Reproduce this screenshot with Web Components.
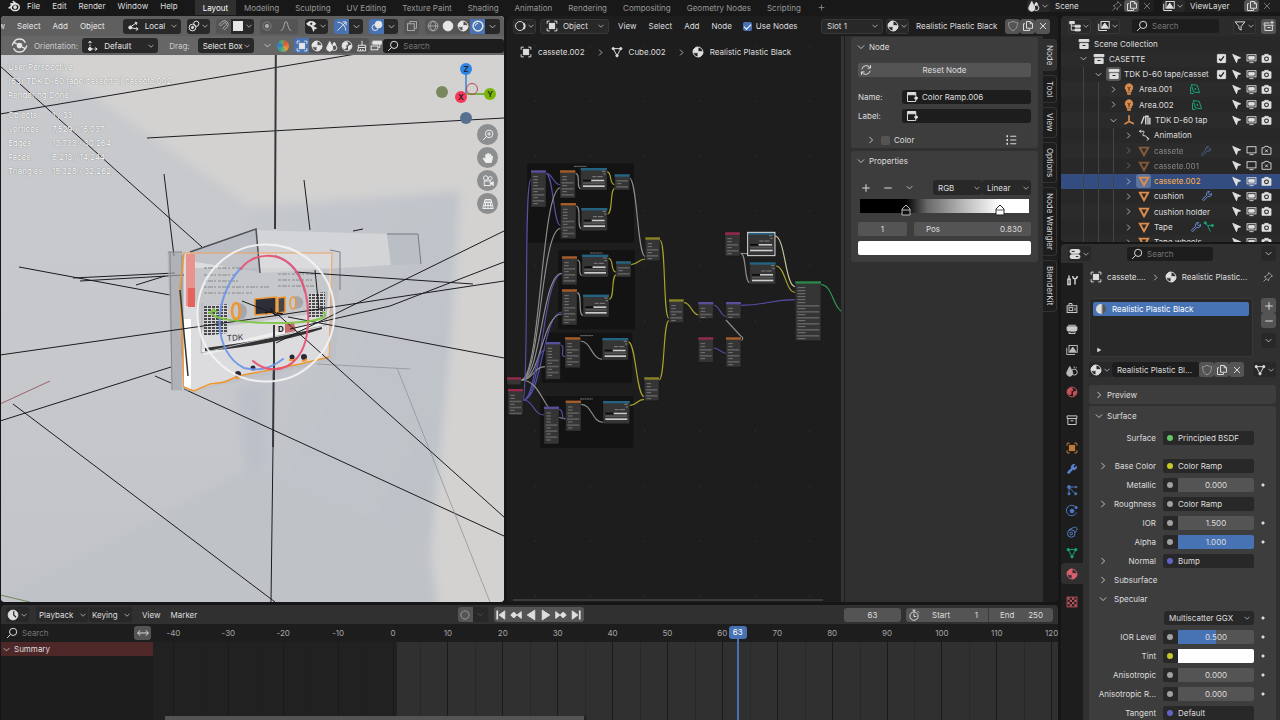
<!DOCTYPE html>
<html lang="en">
<head>
<meta charset="utf-8">
<title>Blender</title>
<style>
  body {
    margin: 0;
    overflow: hidden;
    background: #161616;
    color: #dedede;
    font: 8px/12px Inter, "Noto Sans", sans-serif;
  }
</style>
</head>
<body>
<blender-app></blender-app>

<script>
const ICONS = {
  down: '<path d="M3 5.500l5 5 5-5"/>',
  right: '<path d="M5.500 3l5 5-5 5"/>',
  play: '<path class="f" d="M4 3l9 5-9 5z"/>',
  plus: '<path d="M8 3v10M3 8h10"/>',
  minus: '<path d="M3 8h10"/>',
  close: '<path d="M4 4l8 8M12 4l-8 8"/>',
  search: '<circle cx="9.5" cy="6.5" r="4.8"/><path d="M6 10l-4.5 4.5"/>',
  blender: '<path d="M2 11.5L9 6H4M7 2.5l5.5 4.5" stroke-width="2"/><ellipse cx="10" cy="10" rx="5" ry="4.2" stroke-width="2"/><circle class="f" cx="10" cy="10" r="1.6"/>',
  orbit: '<circle class="f" cx="8" cy="8" r="2"/><path d="M2.5 5.5a6 6 0 0 1 11 0M13.5 10.5a6 6 0 0 1-11 0M1 8l1.5-3 3 1.5M15 8l-1.5 3-3-1.5"/>',
  axes: '<path d="M4 2v10h9" stroke-dasharray="2.5 1.5"/><path d="M2 4l2-2.5L6 4M11 10l2.5 2L11 14"/><circle class="f" cx="4" cy="12" r="2"/>',
  local: '<path d="M2 10l9-6M2 10l11 2M9 3l3 .5-1 3M11 9.5l2.5 2.5-3 2"/><circle class="f" cx="3" cy="10" r="2"/>',
  pivot: '<circle cx="6" cy="10" r="4.5"/><circle class="f" cx="6" cy="10" r="1.5"/><circle cx="11" cy="5" r="3.5"/>',
  magnet: '<path d="M3 6l4-4a5 5 0 0 1 7 7l-4 4-2-2 4-4a2 2 0 0 0-3-3L5 8z"/>',
  square: '<rect class="f" x="2" y="2" width="12" height="12"/>',
  target: '<circle class="f" cx="8" cy="8" r="2.2"/><circle cx="8" cy="8" r="5.5" opacity=".5"/>',
  falloff: '<path d="M1 14c5 0 4-12 7-12s2 12 7 12"/>',
  eye: '<path class="f" d="M1 5c3-4 9-4 12 0-1 1.500-2 2-4 2L8 10l-1-2C4 8 2 7 1 5zM8 8l6 3-3 .6L10 15z"/><circle cx="7" cy="5" r="1" fill="#222" stroke="#222"/>',
  gizmo: '<path d="M2 3c6 0 11 5 11 11M2 14L13 3M9 2.500h4.500V7"/>',
  overlay: '<circle cx="5.500" cy="10" r="4"/><circle class="f" cx="10" cy="6" r="4.500"/>',
  xray: '<rect x="2" y="5" width="9" height="9"/><path d="M5 5V2h9v9h-3"/>',
  wire: '<circle cx="8" cy="8" r="6.500"/><path d="M1.500 8h13M8 1.500c-5 4-5 9 0 13M8 1.500c5 4 5 9 0 13"/>',
  solid: '<circle class="f" cx="8" cy="8" r="6.500"/>',
  material: '<circle cx="8" cy="8" r="6.500"/><path class="f" d="M8 8V1.500A6.500 6.500 0 0 0 1.500 8c2 1.500 4 1.500 6.500 0zM8 8c2-1 4.500-1 6.500 0A6.500 6.500 0 0 1 8 14.500z"/>',
  rendered: '<circle cx="8" cy="8" r="6.500" stroke-width="2"/><path d="M4.500 8A3.500 3.500 0 0 1 8 4.500"/>',
  editor: '<circle cx="8" cy="8" r="6"/><path d="M12.500 4a6 6 0 0 1 0 8" stroke-width="2.500"/>',
  object: '<rect class="f" x="4.500" y="4.500" width="7" height="7"/><path d="M1.500 5V1.500H5M11 1.500h3.500V5M14.500 11v3.500H11M5 14.500H1.500V11"/>',
  mesh: '<path d="M3 3.500h10L8 13z"/><circle class="f" cx="3" cy="3.500" r="1.500"/><circle class="f" cx="13" cy="3.500" r="1.500"/><circle class="f" cx="8" cy="13" r="1.500"/>',
  tri: '<path d="M2.500 3.500h11L8 13.500z" stroke-width="2.600"/>',
  drop: '<path class="f" d="M5 2l3.500 7a4 4 0 1 1-7 0z"/><circle cx="11" cy="10.500" r="3.500"/><path class="f" d="M11 3l2 3H9z"/>',
  world: '<circle cx="8" cy="8" r="6.500"/><path class="f" d="M3 4l5-1 1 3-3 1 1 3-2 2-3-3zM10 8l4-1-1 4-3 2z"/>',
  shield: '<path d="M8 1.500c2 1.500 4 2 6 2 0 6-2 9-6 11-4-2-6-5-6-11 2 0 4-.5 6-2z"/>',
  copy: '<path d="M6 2h5l3 3v6H6zM11 2v3h3M4 5H2v9h8v-2"/>',
  pin: '<path d="M9 2l5 5-2 .5-3 3-.5 2.500L3 7.500 5.500 7l3-3zM5.500 10.500L2 14"/>',
  image: '<rect x="4" y="2" width="11" height="9"/><path class="f" d="M5 10l4-6 4 6z"/><path d="M1 5v9h11"/>',
  brush: '<path d="M8 1v6M3 7h10v3H3zM3.500 10L2 14.500h11l-.5-4.500M6 14v-2M9 14v-2"/>',
  roll: '<rect class="f" x="4" y="1.500" width="11" height="4"/><rect x="1.500" y="8" width="9" height="5"/><path d="M2 4h2M13 6v4h-2"/>',
  node: '<path class="f" d="M2 2h11v3H2z"/><path d="M2 5v9h9M13 5v2M13 12v2h-2"/><circle class="f" cx="13.500" cy="9.500" r="1.800"/>',
  refresh: '<path d="M2.500 7a6 6 0 0 1 11-2M13.500 9a6 6 0 0 1-11 2M14 1.500V5.500h-4M2 14.500v-4h4"/>',
  list: '<path d="M7 3h8M7 8h8M7 13h8"/><path d="M2 3h2M2 8h2M2 13h2" stroke-width="2.400"/>',
  tree: '<path class="f" d="M1 2h6v3H1zM8 7h7v2.500H8zM8 12h7v2.500H8z"/><path d="M3 5v8.500h5M3 8h5"/>',
  filter: '<path d="M1.500 2.500h13L9.500 8.500v5l-3-2v-3z"/>',
  collection: '<path class="f" d="M1.500 2h13v3h-13zM2.500 7.500h11v6.500h-11z"/><path d="M6 10h4" stroke="#222" stroke-width="1.500"/>',
  box: '<path d="M1.500 2.500h13v3.500h-13zM2.500 6v8h11V6M6 9h4"/>',
  newbox: '<path d="M1.500 4h7M1.500 4v3h12V8M2.500 7v7h10V7M6 10h4M12 1v5M9.500 3.500h5"/>',
  bulb: '<path class="f" d="M8 1a5 5 0 0 1 3 9v2H5v-2a5 5 0 0 1 3-9zM6 13.500h4V15H6z"/><path d="M8 11V7L6 5.500M8 7l2-1.500" stroke="#3a2a1a"/>',
  area: '<path d="M3 2l8 1 3 10-8-1zM2 5v9h4"/><circle class="f" cx="8.500" cy="8" r=".8"/>',
  empty: '<path d="M8 1.500V10L2 13.500M8 10l6.500 3" stroke-width="2.200"/>',
  nla: '<path d="M3 13L7 3M9 14V3h3v11M14.500 14V5" stroke-width="1.800"/>',
  anim: '<path d="M2 3h5c4 0-4 6 1 6s3 4 6 4M12 10.500l2.500 2.500-2.500 2.500M4 1L2 3l2 2"/>',
  wrench: '<path d="M14 4.500a3.500 3.500 0 0 1-5 4L4.500 13.500a1.400 1.400 0 0 1-2-2L7.500 7a3.500 3.500 0 0 1 4-5L9.500 4.500l2 2z"/>',
  fwrench: '<path class="f" d="M14 4.500a3.500 3.500 0 0 1-5 4L4.500 13.500a1.400 1.400 0 0 1-2-2L7.500 7a3.500 3.500 0 0 1 4-5L9.500 4.500l2 2z"/>',
  vgroup: '<path d="M3 2l3 4h6M6 6l4 8"/><circle class="f" cx="3" cy="2.500" r="1.500"/><circle class="f" cx="12.500" cy="6" r="1.500"/>',
  check: '<rect class="f" x="2" y="2" width="12" height="12" rx="1"/><path d="M4.500 8.500l2.500 2.500L11.500 5" stroke="#222" stroke-width="2"/>',
  cursor: '<path class="f" d="M2.500 2l11.500 5-4.500 1.500L8 14z"/>',
  monitor: '<rect x="1.500" y="2.500" width="13" height="9"/><path d="M5 14h6"/><path class="f" d="M4 5h8v4H4z"/>',
  monitorOff: '<rect x="1.500" y="2.500" width="13" height="9"/><path d="M5 14h6"/>',
  camera: '<path class="f" d="M1.500 4h3l1-2h5l1 2h3v9.500h-13z"/><circle cx="8" cy="8.500" r="2.800" stroke="#222" stroke-width="1.500"/>',
  cameraOff: '<path d="M1.500 4h3l1-2h5l1 2h3v9.500h-13zM6 6.500l4 4M10 6.500l-4 4"/>',
  toggles: '<rect class="f" x="1.500" y="2" width="13" height="5" rx="2"/><rect class="f" x="1.500" y="9" width="13" height="5" rx="2"/><path d="M3.500 4.500h4M9 11.500h3.500" stroke="#222"/>',
  tools: '<path d="M4 2v5M2.500 7h3v7h-3zM12 14V7M9 2.500c0 5 6 5 6 0" stroke-width="2"/>',
  render: '<rect x="1.500" y="5" width="13" height="9"/><path d="M4 5V2h4v3"/><rect x="4" y="7.500" width="5" height="4"/><path d="M12 7.500v4"/>',
  printer: '<path class="f" d="M1.500 5h13v5h-13z"/><path d="M3 3h10M4 9v5h8V9M5 13l2-2 2 1 2-2"/>',
  scene: '<path class="f" d="M5 2l3.500 7a4 4 0 1 1-7 0z"/><circle cx="11" cy="9.500" r="4"/><path d="M11 2v2M14 3l-1 1.500"/>',
  orangebox: '<rect class="f" x="4.500" y="4.500" width="7" height="7"/><path d="M1.500 5V1.500H5M11 1.500h3.500V5M14.500 11v3.500H11M5 14.500H1.500V11"/>',
  particles: '<path d="M4 3v9M4 4h10M4 4l8 9"/><circle class="f" cx="4" cy="4" r="2"/><circle class="f" cx="4" cy="13" r="1.500"/><circle class="f" cx="13" cy="13" r="1.500"/><circle class="f" cx="13.500" cy="4" r="1"/>',
  physics: '<circle class="f" cx="8" cy="8" r="2.500"/><path d="M13 3A7 7 0 1 0 14 10"/><circle class="f" cx="13.500" cy="3.500" r="1.500"/>',
  constraint: '<circle cx="7" cy="10" r="5"/><circle cx="7" cy="10" r="1.800"/><path d="M4 5l6-3c4-2 6 2 4 4l-2 3"/>',
  checker: '<rect x="1.500" y="1.500" width="13" height="13"/><path class="f" stroke="none" d="M2 2h3v3H2zM8 2h3v3H8zM5 5h3v3H5zM11 5h3v3h-3zM2 8h3v3H2zM8 8h3v3H8zM5 11h3v3H5zM11 11h3v3h-3z"/>',
  clock: '<circle class="f" cx="8" cy="8" r="6.500"/><path d="M9 3v5l3 3" stroke="#222" stroke-width="1.600"/>',
  expand: '<path d="M1 8h14M4 4.500L1 8l3 3.500M12 4.500L15 8l-3 3.500"/>',
  ring: '<circle cx="8" cy="8" r="5.500"/>',
  first: '<path d="M3 2v12" stroke-width="2.400"/><path class="f" d="M13 2.500v11L5.500 8z"/>',
  keyPrev: '<path class="f" d="M5 4l4 4-4 4-4-4zM15 3.500v9L9.500 8z"/>',
  back: '<path class="f" d="M13 1.500v13L3 8z"/>',
  forward: '<path class="f" d="M3 1.500v13L13 8z"/>',
  keyNext: '<path class="f" d="M11 4l4 4-4 4-4-4zM1 3.500v9L6.500 8z"/>',
  last: '<path d="M13 2v12" stroke-width="2.400"/><path class="f" d="M3 2.500v11L10.500 8z"/>',
  stopwatch: '<circle cx="8" cy="9.500" r="5.500"/><path d="M8 6v4h3M6 1.500h4M8 1.500V4M13 3l1.500 1.500"/>',
  zoom: '<circle cx="9.500" cy="6.500" r="5"/><path d="M6 10l-4.500 4.500M9.500 4v5M7 6.500h5"/>',
  hand: '<path class="f" d="M5 14L1.500 8.500 3 8l2 2V3.500h1.500V8L7.500 2H9l.3 6L10.500 3l1.400.3L11.500 8.500l1.500-3 1.300.5-2 8z"/>',
  movie: '<circle cx="5" cy="4" r="3"/><circle cx="11" cy="4.500" r="2.500"/><rect x="3" y="8" width="8" height="6"/><path class="f" d="M11 11l4-2v5z"/>',
  grid: '<path d="M4 2h8l3 12H1zM8 2v12M3 6h10M2 10h12M5.500 2L4 14M10.500 2L12 14"/>'
};

const RESET = `
  * { box-sizing: border-box; }
  button, input, select {
    margin: 0; padding: 0; border: 0; background: none;
    color: inherit; font: inherit; min-width: 0; appearance: none; outline: 0;
  }
  button { display: inline-flex; align-items: center; justify-content: center; }
`;

const icon = (name, style = "") => `<ui-icon name="${name}" style="${style}"></ui-icon>`;

class UiElement extends HTMLElement {
  constructor() {
    super();
    this.attachShadow({ mode: "open" });
  }

  connectedCallback() {
    this.shadowRoot.innerHTML = `<style>${RESET}${this.styles()}</style>${this.markup()}`;
  }

  attr(name, fallback = "") {
    return this.getAttribute(name) ?? fallback;
  }

  styles() { return ""; }
  markup() { return ""; }
}

class UiIcon extends UiElement {
  styles() {
    return `
      :host { display: inline-flex; flex: none; width: 12px; height: 12px; }
      svg { width: 100%; height: 100%; fill: none; stroke: currentColor; stroke-width: 1.3; overflow: visible; }
      .f { fill: currentColor; }
    `;
  }

  markup() {
    return `<svg viewBox="0 0 16 16" aria-hidden="true">${ICONS[this.attr("name")] || ""}</svg>`;
  }
}

// Icon button; "menu" adds the little arrow on the right
class UiButton extends UiElement {
  styles() {
    return `
      :host { display: flex; flex: none; height: 15px; width: 15px; --bg: transparent; }
      :host([menu]) { width: 23px; --bg: #282828; }
      :host([tone="mid"]) { --bg: #545454; }
      :host([tone="dark"]) { --bg: #282828; }
      :host([tone="on"]) { --bg: #4772b3; }
      button { flex: 1; gap: 1px; background: var(--bg); border-radius: var(--r, 3px); }
      .arrow { width: 8px; height: 8px; }
      :host([icon="down"]) ui-icon { width: 9px; height: 9px; }
    `;
  }

  markup() {
    const arrow = this.hasAttribute("menu") ? '<ui-icon class="arrow" name="down"></ui-icon>' : "";
    return `<button type="button" aria-label="${this.attr("label", this.attr("icon"))}">${icon(this.attr("icon"))}${arrow}</button>`;
  }
}

class UiSelect extends UiElement {
  styles() {
    return `
      :host { display: flex; flex: none; align-items: center; height: 15px; padding: 0 3px 0 5px; background: #282828; border-radius: 3px; }
      select { flex: 1; height: 100%; }
      .lead { margin-right: 5px; }
      .arrow { width: 8px; height: 8px; pointer-events: none; }
    `;
  }

  markup() {
    const lead = this.hasAttribute("icon") ? `<ui-icon class="lead" name="${this.attr("icon")}"></ui-icon>` : "";
    return `${lead}<select aria-label="${this.attr("label")}"><option>${this.attr("value")}</option></select><ui-icon class="arrow" name="down"></ui-icon>`;
  }
}

class UiField extends UiElement {
  styles() {
    return `
      :host { display: flex; align-items: center; min-width: 0; height: 14px; padding: 0 4px; gap: 4px; background: #1d1d1d; border-radius: 3px; }
      input { flex: 1; width: 100%; height: 100%; }
      input::placeholder { color: #757575; opacity: 1; }
    `;
  }

  markup() {
    const lead = this.hasAttribute("icon") ? icon(this.attr("icon")) : "";
    return `${lead}<input type="text" aria-label="${this.attr("label", this.attr("placeholder"))}" placeholder="${this.attr("placeholder")}" value="${this.attr("value")}">`;
  }
}

class UiPanel extends UiElement {
  styles() {
    return `
      :host { display: block; background: #3d3d3d; border-radius: 3px; }
      .head { display: flex; align-items: center; width: 100%; height: 19px; padding: 0 4px 0 5px; gap: 3px; }
      .head ui-icon { width: 10px; height: 10px; }
      .grip { margin-left: auto; width: 9px; height: 4px; background: radial-gradient(circle, #888 35%, transparent 45%) 0 0 / 2px 2px; }
    `;
  }

  markup() {
    return `
      <button class="head" type="button">${icon(this.hasAttribute("open") ? "down" : "right")}<span>${this.attr("heading")}</span><i class="grip"></i></button>
      <slot></slot>
    `;
  }
}

class TopBar extends UiElement {
  styles() {
    return `
      :host { display: flex; align-items: flex-start; height: 16px; padding: 0 0 0 7px; background: #181818; overflow: hidden; }
      nav, .tabs, .box { display: flex; align-items: center; }
      nav { gap: 12px; height: 11px; margin-right: 17px; }
      nav ui-icon { margin-right: -5px; width: 13px; height: 13px; }
      .tabs { height: 15px; color: #989898; }
      .tabs button { height: 15px; padding: 0 8px; }
      .tabs .on { background: #303030; color: #fff; }
      .box { height: 12px; background: #1f1f1f; border-radius: 3px; }
      .box ui-button { height: 12px; }
      .scene { margin-left: auto; width: 127px; margin-right: 8px; }
      .layer { width: 118px; }
      .box input { width: 59px; padding-left: 5px; }
      .dim { color: #777; }
    `;
  }

  markup() {
    const tabs = ["Layout", "Modeling", "Sculpting", "UV Editing", "Texture Paint", "Shading", "Animation", "Rendering", "Compositing", "Geometry Nodes", "Scripting"];
    return `
      <nav>${icon("blender")}${["File", "Edit", "Render", "Window", "Help"].map((t) => `<button type="button">${t}</button>`).join("")}</nav>
      <div class="tabs">
        ${tabs.map((t, i) => `<button type="button" class="${i ? "" : "on"}">${t}</button>`).join("")}
        <button type="button" aria-label="Add workspace">${icon("plus", "width:9px;height:9px")}</button>
      </div>
      <div class="box scene"><ui-button menu icon="drop"></ui-button><input aria-label="Scene" value="Scene"><ui-button class="dim" icon="pin"></ui-button><ui-button tone="mid" icon="copy"></ui-button><ui-button class="dim" icon="close"></ui-button></div>
      <div class="box layer"><ui-button menu icon="image"></ui-button><input aria-label="View layer" value="ViewLayer"><ui-button tone="mid" icon="copy"></ui-button><ui-button class="dim" icon="close"></ui-button></div>
    `;
  }
}

class SceneView extends UiElement {
  styles() {
    return `
      :host { display: block; position: absolute; inset: 0; }
      svg { display: block; width: 100%; height: 100%; }
      .wires { stroke: #1c1c20; stroke-width: 1; fill: none; }
    `;
  }

  markup() {
    return `
      <svg viewBox="1 16 503 586" preserveAspectRatio="xMidYMid slice" aria-label="Rendered scene">
        <defs>
          <filter id="soft"><feGaussianBlur stdDeviation="4"/></filter>
          <linearGradient id="left" x2="0" y2="1"><stop offset="0" stop-color="#c9cace"/><stop offset=".6" stop-color="#c6c8cc"/><stop offset="1" stop-color="#c0c3c8"/></linearGradient>
          <linearGradient id="wall" x2="1" y2="1"><stop offset="0" stop-color="#c4c7cc"/><stop offset="1" stop-color="#bdc2c8"/></linearGradient>
          <pattern id="grille" width="4" height="3" patternUnits="userSpaceOnUse"><rect width="4" height="3" fill="#d6d6d8"/><rect width="3" height="2" fill="#4a4a4e"/></pattern>
        </defs>
        <rect width="520" height="620" fill="url(#left)"/>
        <g filter="url(#soft)">
          <path d="M22 45L135 125 250 206 460 190 430 560 440 620H530V0H0z" fill="#d3d2d1"/>
          <path d="M248 212L460 192 452 330 430 560 350 520 250 468z" fill="url(#wall)"/>
          <path d="M250 468L430 545 440 620H-10V604z" fill="#bfc3c8"/>
          <path d="M235 385h30v85h-20z" fill="#b5bac5" opacity=".4"/>
        </g>
        <g class="wires">
          <path d="M0 114L350 55 500 32M0 66L138 190 202 247M147 138L504 118M164 174L174 256M304 180L310 230"/>
          <path d="M276 16L275 229M274 325L273 447" stroke="#38383c" stroke-width="2"/>
          <path d="M273 447L271 602M19 267L170 295M73 278L175 273M80 281L184 275M136 285L165 276"/>
          <path d="M353 231l10-2M0 421L171 367M155 376L171 383M13 404L275 602M184 389L504 536"/>
          <path d="M0 404L50 381" stroke="#a0606a"/><path d="M0 595L30 602" stroke="#6b8a5a"/>
          <path d="M317 364L410 369M397 368L490 602" stroke="#92949a" stroke-width=".8"/>
        </g>
        <g>
          <path d="M167 252H340V262L336 360 194 391 172 391z" fill="#b6b8bd" opacity=".35"/>
          <path d="M168 252h14v138h-10z" fill="#9fa2a8" opacity=".5"/>
          <path d="M168 252h14M170 252l2 138M182 255v100" stroke="#85888d" fill="none"/>
          <path d="M184 253L332 253 329 357 300 364 238 376 194 391 184 387z" fill="#dcdcdf"/>
          <path d="M190 268L330 268 327 312 200 330z" fill="#c6c7cb"/>
          <path d="M190 252L256 229 260 272 196 262z" fill="#b5b8bf" opacity=".7"/>
          <path d="M256 230L387 234 391 265 260 273z" fill="#dadadb" opacity=".7"/>
          <path d="M387 234L418 234 421 264 391 265z" fill="#b5bac2" opacity=".6"/>
          <path d="M190 252L256 229 260 273" fill="none" stroke="#4d4f54" stroke-width="1.500"/>
          <path d="M387 234L418 234 421 264M330 250l10 2v38" fill="none" stroke="#777a80"/>
          <path d="M186 254h9v52h-9z" fill="#e9938f"/><path d="M188 288h7v19h-7z" fill="#e4635d"/>
          <path d="M204 268h38M204 275h30M204 281h34M204 287h66M204 293h48M278 274h38M278 280h34M278 286h36" stroke="#a6a8ac" stroke-width="2" stroke-dasharray="3 1 5 1 2 2"/>
          <path d="M201 350L324 320 323 328 204 355z" fill="#eeeeef"/>
          <path d="M205 348Q270 340 322 327L322 329Q270 346 205 351z" fill="#333"/>
          <path d="M202 303l-1 50 125-28V292" fill="none" stroke="#b1b3b8"/>
          <path d="M204 306l24-2v29l-24 3z" fill="url(#grille)"/><path d="M309 294l16-2v24l-16 2z" fill="url(#grille)"/>
          <path d="M238 303c12 0 12 17 0 17M295 296c11 0 11 13 0 13" fill="#a5a7ac"/>
          <g fill="none" stroke="#ef972f" stroke-width="1.500">
            <path d="M180 288L184 253" /><path d="M184 253H332L329 357" stroke="#f0a35e" stroke-width="1"/><path d="M329 357L300 364 238 376 225 382 210 384 194 391 184 387 180 288"/>
            <ellipse cx="236" cy="311" rx="4" ry="8" stroke-width="2.500"/><ellipse cx="293" cy="303" rx="3" ry="6"/>
            <path d="M255 299L276 297V313L255 315z" fill="#2d2f38"/><path d="M278 298l7-1v15l-7 1z" fill="#44464e"/>
          </g>
          <path d="M184 319h7v70l-7-3z" fill="#fff"/><path d="M180 290L188 376" stroke="#333" stroke-width="1.500"/>
          <text x="227" y="341" font-size="8" fill="#33363c" transform="rotate(-4 227 341)">TDK</text>
          <text x="278" y="332" font-size="8" font-weight="700" fill="#222">D</text>
          <path d="M285 324l9-1 2 8-11 2z" fill="#c56b68"/>
          <g fill="#26283a"><circle cx="238" cy="374" r="3"/><circle cx="253" cy="368" r="2.500"/><circle cx="292" cy="357" r="2.500"/><circle cx="304" cy="357" r="3"/></g>
          <path d="M235 377q3 3 6-1M302 361q3 0 5-2M289 360h6" fill="none" stroke="#ef972f" stroke-width="2"/>
        </g>
        <g class="wires">
          <path d="M0 355L273 316 504 281M504 231L276 343M504 262L390 306 290 329M288 317L504 358M295 272L473 284M275 312L504 517M315 270L319 310M242 301L280 316"/>
          <path d="M265 313l8-2M270 308l6 8M277 313l6 1" stroke-width="1.500"/>
          <path d="M274 325V382" stroke="#38383c" stroke-width="2"/>
        </g>
        <g fill="none" stroke-width="2" stroke-linecap="round" opacity=".92">
          <path d="M241 268C212 298 212 352 244 368 260 372 272 368 283 359" stroke="#6d95e8"/>
          <path d="M275 256C290 260 301 274 305 292" stroke="#8a7ec8"/>
          <path d="M241 269C250 254 280 248 297 272 312 296 312 340 297 358 284 374 264 371 253 361" stroke="#e8506f"/>
          <path d="M214 309C190 326 345 328 323 312M209 313q4-4 8-1" stroke="#7cc63e"/>
          <circle cx="266" cy="313" r="68.500" stroke="#f4f4f4"/>
        </g>
        <g font-size="8" font-weight="600" text-anchor="middle" fill="#222">
          <path d="M466 70v24h24" stroke="#3b82d6" fill="none" stroke-width="1.500"/><path d="M466 94h24" stroke="#84b813" stroke-width="1.500"/>
          <circle cx="472" cy="89" r="5.500" fill="none" stroke="#b5475a"/>
          <circle cx="442" cy="92" r="6" fill="#78895f"/><circle cx="466" cy="118" r="6" fill="#57708f"/>
          <circle cx="466" cy="69" r="6" fill="#2f83e3"/><circle cx="461" cy="97" r="6" fill="#f8375a"/><circle cx="490" cy="94" r="6" fill="#78b506"/>
          <text x="466" y="72">Z</text><text x="461" y="100">X</text><text x="490" y="97">Y</text>
        </g>
      </svg>
    `;
  }
}

class View3d extends UiElement {
  styles() {
    return `
      :host { display: flex; flex-direction: column; position: relative; min-width: 0; border-radius: 4px; overflow: hidden; color: #e6e6e6; }
      .bar { display: flex; align-items: center; position: relative; height: 20px; background: #5f5f5f; white-space: nowrap; }
      .bar + .bar { height: 19px; background: #666; }
      .bar > span { color: #ccc; }
      .menu { display: flex; gap: 12px; margin: 0 18px 0 0; }
      .menu button:first-child { width: 4px; justify-content: flex-end; overflow: hidden; }
      .group { display: flex; --r: 0; border-radius: 3px; overflow: hidden; }
      .shade { width: 75px; background: #545454; margin-right: 4px; justify-content: space-between; }
      .modes { background: #545454; }
      .gap { margin-right: 6px; }
      .push { margin-left: auto; }
      .dim { color: #aaa; }
      .small { width: 14px; }
      .ball { width: 12px; height: 12px; margin: 0 5px 0 2px; border-radius: 50%; background: conic-gradient(from 40deg, #e0503c, #e59a3a 25%, #35b08a 45%, #3577c9 70%, #4fae6a 85%, #e0503c); }
      .info, .stats { position: relative; margin: 0; padding-left: 7px; color: #fff; text-shadow: 0 0 1px #555; line-height: 14px; }
      .info { padding-top: 5px; }
      .stats { display: grid; grid-template-columns: 44px max-content; margin-top: 6px; }
      .stats dd { margin: 0; }
      .nav { position: absolute; right: 6px; top: 108px; display: flex; flex-direction: column; gap: 2px; }
      .nav button { width: 21px; height: 21px; border-radius: 50%; background: #8d8e90; color: #eee; }
    `;
  }

  markup() {
    const stats = [["Objects", "1 / 33"], ["Vertices", "7,529 / 16,037"], ["Edges", "13,733 / 30,264"], ["Faces", "6,213 / 14,244"], ["Triangles", "15,328 / 32,262"]];
    return `
      <scene-view></scene-view>
      <div class="bar">
        <div class="menu"><button>w</button><button>Select</button><button>Add</button><button>Object</button></div>
        <ui-select class="gap" icon="local" label="Transform orientation" value="Local" style="width:58px"></ui-select>
        <ui-button class="gap" menu icon="pivot"></ui-button>
        <div class="group gap"><ui-button tone="mid" class="dim" icon="magnet"></ui-button><ui-button menu icon="square"></ui-button></div>
        <div class="group"><ui-button tone="mid" class="dim" icon="target"></ui-button><ui-button tone="mid" class="dim" icon="falloff" style="width:23px"></ui-button></div>
        <ui-button class="gap push" menu icon="eye"></ui-button>
        <div class="group gap"><ui-button tone="on" icon="gizmo"></ui-button><ui-button class="small" tone="dark" icon="down"></ui-button></div>
        <div class="group gap"><ui-button tone="on" icon="overlay"></ui-button><ui-button class="small" tone="dark" icon="down"></ui-button></div>
        <ui-button class="gap dim" tone="mid" icon="xray"></ui-button>
        <div class="group shade"><ui-button class="dim" icon="wire"></ui-button><ui-button icon="solid"></ui-button><ui-button icon="material"></ui-button><ui-button tone="on" icon="rendered"></ui-button><ui-button tone="dark" icon="down"></ui-button></div>
      </div>
      <div class="bar">
        ${icon("orbit", "width:17px;height:17px;margin:0 6px 0 10px")}
        <span>Orientation:</span>
        <ui-select icon="axes" label="Orientation" value="Default" style="width:76px;margin:0 11px 0 4px"></ui-select>
        <span>Drag:</span>
        <ui-select label="Drag" value="Select Box" style="width:56px;margin-left:8px"></ui-select>
        <ui-button class="push" icon="down"></ui-button>
        <i class="ball"></i>
        <div class="group modes"><ui-button tone="on" icon="object"></ui-button><ui-button icon="material"></ui-button><ui-button icon="drop"></ui-button><ui-button icon="world"></ui-button><ui-button icon="brush"></ui-button></div>
        <ui-button icon="roll" style="width:14px"></ui-button>
        <ui-field icon="search" placeholder="Search" style="flex:0 0 24%"></ui-field>
      </div>
      <p class="info">User Perspective<br>(63) TDK D-60 tape/cassette | cassete.002<br>Rendering Done</p>
      <dl class="stats">${stats.map(([k, v]) => `<dt>${k}</dt><dd>${v}</dd>`).join("")}</dl>
      <div class="nav">${["zoom", "hand", "movie", "grid"].map((n) => `<button type="button" aria-label="${n}">${icon(n)}</button>`).join("")}</div>
    `;
  }
}

// One unit of the graph is a third of a pixel
class NodeGraph extends UiElement {
  styles() {
    return `
      :host { display: block; position: absolute; inset: 0; overflow: hidden; }
      svg { display: block; width: 100%; height: 100%; }
    `;
  }

  node([x, y, w, h, kind]) {
    const tones = { v: "#57509a", o: "#a85c28", t: "#246482", m: "#246482", y: "#8a8524", r: "#98294a", g: "#2c8748" };
    let rows = "";
    for (let i = 17; i < h - 5; i += 9) {
      const long = i % 2 && i > h * 0.35;
      rows += long
        ? `<rect x="${x + 5}" y="${y + i}" width="${w - 10}" height="5" fill="#5d5d5d"/>`
        : `<path d="M${x + 7} ${y + i + 2}h${w * 0.3}" stroke="#999" stroke-width="2"/>`;
    }
    if (kind === "t") {
      rows = `
        <path d="M${x + 35} ${y + 26}h12M${x + 50} ${y + 26}h16M${x + 64} ${y + 10}h10M${x + 68} ${y + 18}h7" stroke="#aaa" stroke-width="2"/>
        <rect x="${x + 7}" y="${y + 35}" width="${w - 14}" height="5" fill="#0c0c0c"/>
        <rect x="${x + w * 0.4}" y="${y + 35}" width="${w * 0.5}" height="5" fill="#c9c9c9"/>
        <rect x="${x + 7}" y="${y + 43}" width="${w - 14}" height="5" fill="#555"/>
        <rect x="${x + 7}" y="${y + 52}" width="${w - 14}" height="5" fill="#ccc"/>`;
    }
    return `<g><rect x="${x}" y="${y}" width="${w}" height="${h}" rx="2" fill="#353535" stroke="#111"/><rect x="${x}" y="${y}" width="${w}" height="7" fill="${tones[kind]}"/>${rows}</g>`;
  }

  link([x1, y1, x2, y2, color]) {
    const d = Math.max(18, Math.abs(x2 - x1) * 0.5);
    return `<path d="M${x1} ${y1}C${x1 + d} ${y1} ${x2 - d} ${y2} ${x2} ${y2}" stroke="${color}"/>`;
  }

  markup() {
    const frames = [[82, 40, 320, 238], [175, 300, 230, 238], [125, 548, 272, 150], [120, 738, 280, 155]];
    const nodes = [
      [93, 61, 45, 110, "v"], [136, 576, 45, 112, "v"], [132, 770, 45, 112, "v"], [595, 456, 45, 50, "v"], [678, 456, 45, 50, "v"],
      [180, 61, 46, 83, "o"], [182, 159, 46, 107, "o"], [186, 319, 45, 85, "o"], [186, 418, 45, 107, "o"], [195, 562, 46, 91, "o"], [197, 752, 46, 91, "o"], [678, 562, 45, 89, "o"],
      [242, 54, 79, 66, "t"], [244, 174, 78, 68, "t"], [246, 314, 79, 67, "t"], [249, 434, 78, 67, "t"], [307, 564, 78, 66, "t"], [309, 753, 80, 68, "t"], [743, 247, 82, 70, "t"], [749, 337, 78, 66, "t"],
      [344, 73, 45, 47, "m"], [348, 334, 45, 47, "m"],
      [436, 262, 44, 70, "y"], [507, 448, 44, 70, "y"], [433, 682, 44, 70, "y"],
      [21, 682, 42, 22, "r"], [24, 717, 45, 77, "r"], [675, 247, 45, 71, "r"], [595, 562, 45, 75, "r"],
      [886, 394, 77, 178, "g"]
    ];
    const [grey, blue, gold] = ["#8d8d8d", "#5450a4", "#a9a42c"];
    const links = [
      [138, 70, 180, 104, blue], [138, 70, 182, 227, blue], [63, 690, 182, 113, grey], [63, 690, 182, 235, grey],
      [63, 690, 186, 370, grey], [69, 750, 186, 372, blue], [69, 750, 186, 486, blue], [63, 690, 186, 492, grey],
      [63, 690, 136, 650, grey], [69, 750, 136, 600, blue], [69, 750, 132, 795, blue], [63, 690, 197, 806, grey],
      [181, 585, 195, 620, blue], [177, 779, 197, 808, blue],
      [226, 70, 244, 117, grey], [228, 168, 246, 237, grey], [231, 330, 248, 377, grey], [231, 428, 250, 497, grey],
      [241, 573, 307, 628, grey], [243, 763, 309, 817, grey],
      [320, 65, 344, 104, gold], [322, 192, 346, 114, gold], [325, 325, 348, 366, gold], [327, 448, 350, 374, gold],
      [388, 84, 436, 320, grey], [393, 344, 436, 327, gold], [384, 575, 433, 740, gold], [388, 767, 433, 748, gold],
      [480, 271, 507, 505, gold], [477, 690, 507, 512, gold], [551, 457, 597, 495, gold], [640, 465, 680, 500, blue],
      [723, 466, 886, 449, blue], [640, 594, 680, 610, blue],
      [722, 310, 745, 311, grey], [722, 310, 750, 398, grey], [825, 258, 886, 410, "#c8c49a"], [827, 348, 886, 427, gold],
      [963, 404, 1037, 488, "#2f9a52"]
    ];
    return `
      <svg viewBox="507 36 335 566" preserveAspectRatio="xMinYMin slice" aria-label="Node graph">
        <defs><pattern id="dots" width="55" height="55" patternUnits="userSpaceOnUse" x="534" y="45"><rect width="2" height="2" fill="#252525"/></pattern></defs>
        <rect x="500" y="30" width="360" height="600" fill="url(#dots)"/>
        <g transform="translate(500 150) scale(.3333)">
          ${frames.map(([x, y, w, h]) => `<rect x="${x}" y="${y}" width="${w}" height="${h}" rx="4" fill="#131313"/><path d="M${x + w / 2 - 20} ${y + 9}h38" stroke="#77706a" stroke-width="3" stroke-dasharray="6 1"/>`).join("")}
          <g fill="none" stroke-width="3.500">${links.map(this.link).join("")}<path d="M69 750C88 700 70 90 93 88" stroke="${blue}"/><path d="M724 572q10-8-2-14L678 510" stroke="${grey}"/></g>
          ${nodes.map(this.node).join("")}
          <rect x="743" y="247" width="82" height="70" fill="none" stroke="#ddd" stroke-width="3"/>
        </g>
      </svg>
    `;
  }
}

class NodeEditor extends UiElement {
  styles() {
    return `
      :host { display: flex; flex-direction: column; min-width: 0; background: #1d1d1d; border-radius: 4px; overflow: hidden; }
      header { display: flex; align-items: center; height: 20px; padding: 0 8px 0 6px; white-space: nowrap; }
      header > button { margin-left: 12px; }
      header ui-select, header ui-button[menu] { border: 1px solid #383838; border-radius: 3px; }
      .use { display: flex; align-items: center; gap: 4px; margin: 0 auto 0 11px; }
      .use input { width: 9px; height: 9px; border-radius: 2px; background: #4772b3; display: grid; place-items: center; }
      .use input::before { content: ""; width: 6px; height: 3px; border: solid #fff; border-width: 0 0 1px 1px; transform: rotate(-45deg); }
      main { display: flex; flex: 1; min-height: 0; }
      .canvas { position: relative; flex: 1; min-width: 0; }
      .crumbs { display: flex; align-items: center; position: relative; gap: 6px; height: 32px; padding-left: 13px; white-space: nowrap; }
      .crumbs .sep { width: 9px; height: 9px; margin: 0 0 0 5px; }
      .hscroll { position: absolute; left: 6px; right: 18px; bottom: 1px; height: 2px; background: #3a3a3a; }
      .vscroll { width: 4px; border-left: 3px solid #333; }
      aside { width: 198px; padding: 1px 5px 0 6px; background: #303030; }
      .body { display: flex; flex-direction: column; padding: 7px 7px 0; }
      .reset { position: relative; height: 14px; margin-bottom: 13px; background: #545454; border-radius: 2px; }
      .reset ui-icon { position: absolute; left: 2px; }
      .field { display: flex; align-items: center; margin-bottom: 5px; }
      .field span { width: 44px; }
      .field ui-field { flex: 1; }
      .color { display: flex; align-items: center; height: 14px; gap: 5px; margin: 5px 14px 1px 8px; }
      .color input { width: 9px; height: 9px; border-radius: 2px; background: #545454; }
      .color label { display: flex; align-items: center; gap: 4px; margin-right: auto; }
      .tools { display: flex; align-items: center; gap: 7px; height: 15px; margin: 3px 0 4px; }
      .modes { display: flex; margin-left: auto; }
      .modes ui-select { width: 49px; padding-right: 1px; }
      .ramp { position: relative; height: 14px; margin: 0 2px 9px; background: linear-gradient(90deg, #000 27%, #6a6a6a 40%, #bbb 62%, #fff 83%); }
      .stop { position: absolute; top: 5px; width: 10px; height: 12px; margin-left: -5px; }
      .nums { display: flex; gap: 7px; margin-bottom: 5px; }
      .nums > * { display: flex; align-items: center; height: 14px; background: #545454; border-radius: 2px; }
      .nums input { width: 100%; text-align: right; }
      .idx { width: 49px; }
      .idx input { text-align: center; }
      .pos { flex: 1; padding: 0 9px 0 12px; }
      .white { height: 14px; margin-bottom: 7px; background: #fff; border-radius: 2px; }
      ui-panel + ui-panel { margin-top: 3px; }
      .tabs { display: flex; flex-direction: column; gap: 4px; width: 15px; padding-top: 3px; }
      .tabs button { writing-mode: vertical-rl; padding: 5px 0; width: 14px; border: 1px solid #333; border-left: 0; border-radius: 0 4px 4px 0; }
      .tabs .on { background: #303030; }
    `;
  }

  markup() {
    const tabs = ["Node", "Tool", "View", "Options", "Node Wrangler", "BlenderKit"];
    return `
      <header>
        <ui-button menu icon="editor" style="margin-right:4px"></ui-button>
        <ui-select icon="object" label="Shader type" value="Object" style="width:69px;margin-right:-3px"></ui-select>
        <button>View</button><button>Select</button><button>Add</button><button>Node</button>
        <label class="use"><input type="checkbox" checked>Use Nodes</label>
        <ui-select label="Slot" value="Slot 1" style="width:62px;margin-right:3px"></ui-select>
        <ui-button menu icon="material"></ui-button>
        <ui-field label="Material" value="Realistic Plastic Black" style="width:96px;padding-left:7px"></ui-field>
        <ui-button tone="mid" icon="shield" style="color:#999"></ui-button><ui-button tone="mid" icon="copy"></ui-button><ui-button tone="mid" icon="close"></ui-button>
      </header>
      <main>
        <div class="canvas">
          <node-graph></node-graph>
          <div class="crumbs">${icon("object")}<span>cassete.002</span><ui-icon class="sep" name="right"></ui-icon>${icon("mesh")}<span>Cube.002</span><ui-icon class="sep" name="right"></ui-icon>${icon("material")}<span>Realistic Plastic Black</span></div>
          <i class="hscroll"></i>
        </div>
        <i class="vscroll"></i>
        <aside>
          <ui-panel heading="Node" open>
            <div class="body">
              <button class="reset" type="button">${icon("refresh")}Reset Node</button>
              <div class="field"><span>Name:</span><ui-field icon="node" label="Name" value="Color Ramp.006"></ui-field></div>
              <div class="field"><span>Label:</span><ui-field icon="node" label="Label"></ui-field></div>
              <div class="color">${icon("right", "width:10px;height:10px")}<label><input type="checkbox">Color</label>${icon("list")}</div>
            </div>
          </ui-panel>
          <ui-panel heading="Properties" open>
            <div class="body">
              <div class="tools"><ui-button icon="plus"></ui-button><ui-button icon="minus"></ui-button><ui-button icon="down"></ui-button>
                <div class="modes"><ui-select label="Color mode" value="RGB"></ui-select><ui-select label="Interpolation" value="Linear"></ui-select></div></div>
              <div class="ramp">
                <svg class="stop" style="left:27%" viewBox="0 0 10 12"><path d="M1 5l4-4 4 4v6H1z" fill="#111" stroke="#bbb"/><path d="M1 6h8" stroke="#bbb"/></svg>
                <svg class="stop" style="left:83%" viewBox="0 0 10 12"><path d="M1 5l4-4 4 4v6H1z" fill="#fff" stroke="#222"/><path d="M1 6h8" stroke="#555"/></svg>
              </div>
              <div class="nums"><div class="idx"><input aria-label="Active stop" value="1"></div><label class="pos">Pos<input value="0.830"></label></div>
              <button class="white" type="button" aria-label="Stop color"></button>
            </div>
          </ui-panel>
        </aside>
        <div class="tabs">${tabs.map((t, i) => `<button type="button" class="${i ? "" : "on"}">${t}</button>`).join("")}</div>
      </main>
    `;
  }
}

class TimeLine extends UiElement {
  styles() {
    return `
      :host { display: flex; flex-direction: column; min-width: 0; background: #1d1d1d; border-radius: 4px 4px 0 0; overflow: hidden; }
      header { display: flex; align-items: center; height: 19px; padding: 0 5px; background: #303030; white-space: nowrap; }
      header > button { margin-left: 10px; }
      header ui-select { padding: 0 1px 0 3px; }
      .group { display: flex; --r: 0; border-radius: 3px; overflow: hidden; }
      .auto { margin-left: auto; }
      .num { display: flex; align-items: center; height: 14px; background: #545454; }
      .num input { width: 100%; text-align: right; }
      .frame { width: 57px; margin: 0 5px 0 auto; border-radius: 3px; }
      .frame input { text-align: center; }
      main { display: flex; flex: 1; min-height: 0; }
      .channels { width: 152px; }
      .find { display: flex; height: 18px; align-items: center; padding-left: 1px; }
      .find ui-field { width: 132px; }
      .find ui-button { height: 14px; width: 17px; }
      .summary { display: flex; align-items: center; gap: 3px; width: 100%; height: 14px; justify-content: flex-start; padding-left: 1px; background: #4e2728; }
      .summary ui-icon { width: 9px; height: 9px; }
      .track { position: relative; flex: 1; min-width: 0; overflow: hidden; }
      .past { position: absolute; left: 0; top: 18px; bottom: 0; width: 100%; background: linear-gradient(90deg, #212121 27%, #303030 27%); }
      .ticks { position: relative; display: grid; grid-auto-flow: column; grid-auto-columns: 6.02%; height: 100%; margin-left: -7px; color: #a6a6a6; }
      .ticks span { text-align: center; line-height: 18px; background: linear-gradient(#1a1a1a, #1a1a1a) center 18px / 1px 100% no-repeat, linear-gradient(#1e1e1e66, #1e1e1e66) 0 18px / 1px 100% no-repeat; }
      .head { position: absolute; left: 64.6%; top: 2px; bottom: 0; width: 18px; margin-left: -9px; text-align: center; color: #fff; line-height: 13px; background: linear-gradient(#4772b3, #4772b3) center / 2px 100% no-repeat; }
      .head b { display: block; font-weight: 400; background: #4772b3; border-radius: 3px; }
      .scroll { position: absolute; left: 1%; bottom: 0; width: 47%; height: 4px; background: #545454; border: solid #222; border-width: 0 3px; border-radius: 3px 3px 0 0; }
    `;
  }

  markup() {
    let ticks = "";
    for (let f = -40; f <= 120; f += 10) ticks += `<span>${f}</span>`;
    return `
      <header>
        <ui-button menu icon="clock" style="margin-right:7px"></ui-button>
        <ui-select label="Playback" value="Playback" style="width:52px"></ui-select>
        <ui-select label="Keying" value="Keying" style="width:43px;margin-left:1px"></ui-select>
        <button>View</button><button>Marker</button>
        <div class="group auto" style="margin-right:6px"><ui-button tone="mid" icon="ring" style="color:#999"></ui-button><ui-button tone="dark" icon="down" style="color:#555"></ui-button></div>
        <div class="group">${["first", "keyPrev", "back", "forward", "keyNext", "last"].map((n) => `<ui-button tone="mid" icon="${n}"></ui-button>`).join("")}</div>
        <div class="num frame"><input aria-label="Current frame" value="63"></div>
        <div class="group"><ui-button tone="mid" icon="stopwatch" style="height:14px"></ui-button>
          <label class="num" style="width:67px;padding:0 10px 0 11px">Start<input value="1"></label>
          <label class="num" style="width:65px;padding:0 10px 0 11px;border-left:1px solid #3a3a3a">End<input value="250"></label></div>
      </header>
      <main>
        <div class="channels">
          <div class="find"><ui-field icon="search" placeholder="Search"></ui-field><ui-button tone="mid" icon="expand"></ui-button></div>
          <button class="summary" type="button">${icon("down")}Summary</button>
        </div>
        <div class="track"><i class="past"></i><div class="ticks">${ticks}</div><div class="head"><b>63</b></div><i class="scroll"></i></div>
      </main>
    `;
  }
}

class TreeRow extends UiElement {
  styles() {
    return `
      :host { display: flex; align-items: center; min-height: 0; padding-right: 6px; white-space: nowrap; }
      :host(:nth-child(even)) { background: #2b2b2b; }
      :host([selected]) { background: #334d80; color: #ffaf49; }
      i, .cell { flex: none; width: 15px; align-self: stretch; display: flex; align-items: center; justify-content: center; }
      i + i { background: linear-gradient(#444, #444) center / 1px 100% no-repeat; }
      .arrow ui-icon { width: 9px; height: 9px; }
      .toggle ui-icon { width: 11px; height: 11px; }
      .arrow, .toggle { color: #e0e0e0; }
      .kind { color: var(--kind, #ddd); border-radius: 3px; }
      :host([active]) .kind { background: #ffffff38; align-self: center; height: 14px; }
      .name { display: flex; align-items: center; flex: 1; min-width: 0; gap: 2px; padding-left: 3px; overflow: hidden; }
      .extra { display: flex; gap: 1px; margin-left: 15px; flex: none; }
      .nla { margin-right: 2px; }
      :host([hid]) .name span, :host([hid]) .kind, :host([hid]) .arrow, :host([hid]) .extra { opacity: .5; }
    `;
  }

  markup() {
    const arrow = this.attr("arrow");
    const extra = this.attr("extra").split(" ").filter(Boolean);
    const toggles = this.attr("toggles").split(" ").filter(Boolean);
    const green = ["area", "vgroup"];
    return `
      ${"<i></i>".repeat(Number(this.attr("level", "0")))}
      <div class="cell arrow">${arrow ? icon(arrow) : ""}</div>
      <div class="cell kind">${icon(this.attr("kind"))}</div>
      <div class="name">${this.hasAttribute("nla") ? '<ui-icon class="nla" name="nla"></ui-icon>' : ""}<span>${this.attr("name")}</span>
        ${extra.length ? `<div class="extra">${extra.map((n) => icon(n, `color:${green.includes(n) ? "#16a47a" : "#6d8fd6"}`)).join("")}</div>` : ""}</div>
      ${toggles.map((n) => `<button class="cell toggle" type="button" aria-label="${n}">${icon(n)}</button>`).join("")}
    `;
  }
}

class OutlinerPanel extends UiElement {
  styles() {
    return `
      :host { display: flex; flex-direction: column; min-height: 0; background: #282828; border-radius: 4px 0 0 4px; overflow: hidden; }
      header { display: flex; align-items: center; flex: none; height: 20px; padding: 0 4px 0 7px; background: #2b2b2b; }
      header ui-button[menu] { border: 1px solid #383838; border-radius: 3px; }
      .tree { display: grid; grid-auto-rows: 1fr; flex: none; height: 214px; }
    `;
  }

  markup() {
    const shown = "cursor monitor camera";
    const hid = "cursor monitorOff cameraOff";
    const rows = [
      [0, "", "collection", "Scene Collection", "", ""],
      [1, "down", "collection", "CASETTE", "", "check " + shown],
      [2, "down", "collection", "TDK D-60 tape/casset", "", "check " + shown, "active"],
      [3, "right", "bulb", "Area.001", "area", shown],
      [3, "right", "bulb", "Area.002", "area", shown],
      [3, "down", "empty", "TDK D-60 tap", "", shown, "nla"],
      [4, "right", "anim", "Animation", "", ""],
      [4, "right", "tri", "cassete", "wrench", hid, "hid"],
      [4, "right", "tri", "cassete.001", "", hid, "hid"],
      [4, "right", "tri", "cassete.002", "", shown, "selected active"],
      [4, "right", "tri", "cushion", "wrench", shown],
      [4, "right", "tri", "cushion holder", "", shown],
      [4, "right", "tri", "Tape", "wrench vgroup", shown],
      [4, "right", "tri", "Tape wheels", "", shown]
    ];
    const orange = ["bulb", "empty", "tri"];
    return `
      <header>
        <ui-button menu icon="tree" style="margin-right:6px"></ui-button><ui-button menu icon="image"></ui-button>
        <ui-field icon="search" placeholder="Search" style="flex:1;margin:0 14px 0 12px"></ui-field>
        <ui-button menu icon="filter" style="margin-right:5px"></ui-button><ui-button tone="mid" icon="newbox"></ui-button>
      </header>
      <div class="tree">
        ${rows.map(([level, arrow, kind, name, extra, toggles, flags = ""]) => `<tree-row level="${level}" arrow="${arrow}" kind="${kind}" name="${name}" extra="${extra}" toggles="${toggles}" ${flags} style="${orange.includes(kind) ? "--kind:#dc8c4d" : ""}"></tree-row>`).join("")}
      </div>
    `;
  }
}

class PropRow extends UiElement {
  styles() {
    return `
      :host { display: flex; align-items: center; height: 14px; white-space: nowrap; }
      .label { display: flex; align-items: center; justify-content: flex-end; flex: 1; margin-right: 7px; }
      .label ui-icon { width: 10px; height: 10px; margin: 0 auto 0 0; }
      :host([type="group"]) .label { justify-content: flex-start; gap: 6px; }
      :host([type="group"]) .label ui-icon { margin: 0; }
      .box { display: flex; width: 91px; height: 14px; border-radius: 2px; overflow: hidden; background: #282828; }
      .socket { flex: none; width: 6px; height: 6px; margin: 4px; border-radius: 50%; background: var(--socket, #a1a1a1); }
      .box input, .box button { flex: 1; height: 100%; }
      .box button { justify-content: flex-start; padding-left: 1px; }
      .box input { text-align: center; margin-left: 1px; background: linear-gradient(90deg, #4772b3 var(--fill, 0%), #545454 var(--fill, 0%)); }
      .box .white { background: #fff; margin-left: 1px; }
      ui-select { width: 90px; height: 14px; margin-left: 1px; }
      .key { width: 18px; height: 14px; background: radial-gradient(circle, #ddd 1px, transparent 2px); }
      .key.off { background: none; }
    `;
  }

  markup() {
    const type = this.attr("type");
    const label = this.attr("label");
    const value = this.attr("value");
    const arrow = this.hasAttribute("arrow") ? icon(this.attr("arrow")) : "";
    if (type === "group") return `<div class="label">${arrow}<span>${label}</span></div>`;
    const controls = {
      number: `<input id="value" type="text" value="${value}">`,
      link: `<button id="value" type="button">${value}</button>`,
      color: `<button id="value" class="white" type="button"></button>`
    };
    const box = type === "select"
      ? `<ui-select label="Distribution" value="${value}"></ui-select>`
      : `<div class="box"><i class="socket"></i>${controls[type]}</div>`;
    return `${arrow || label ? `<div class="label">${arrow}<label for="value">${label}</label></div>` : '<div style="flex:1"></div>'}${box}<i class="key ${type === "link" ? "off" : ""}"></i>`;
  }
}

class PropertiesPanel extends UiElement {
  styles() {
    return `
      :host { display: flex; flex-direction: column; min-height: 0; background: #303030; border-radius: 4px 0 0 0; overflow: hidden; }
      header { display: flex; align-items: center; flex: none; height: 19px; padding: 0 4px 0 7px; }
      .split { display: flex; flex: 1; min-height: 0; }
      .tabs { display: flex; flex-direction: column; flex: none; width: 22px; padding-top: 6px; background: #1d1d1d; }
      .tabs button { flex: none; height: 21px; border-radius: 4px 0 0 4px; }
      .tabs .on { background: #303030; }
      .tabs .gap { margin-top: 7px; }
      .content { flex: 1; min-width: 0; padding: 6px 4px 0 6px; white-space: nowrap; }
      .crumbs { display: flex; align-items: center; gap: 5px; height: 16px; padding: 0 2px 0 1px; }
      .crumbs .sep { width: 9px; height: 9px; }
      .slots { display: flex; gap: 8px; margin: 13px 0 5px; }
      .list { display: flex; flex-direction: column; flex: 1; height: 59px; padding: 3px; background: #282828; border: 1px solid #383838; border-radius: 3px; }
      .item { justify-content: flex-start; height: 14px; gap: 6px; padding-left: 3px; background: #4772b3; color: #fff; border-radius: 2px; }
      .ball { width: 10px; height: 10px; border-radius: 50%; background: linear-gradient(90deg, #ddd 50%, #555 70%); }
      .foot { display: flex; align-items: center; margin-top: auto; padding-left: 3px; }
      .dots { width: 10px; height: 4px; margin: 0 auto; background: radial-gradient(circle, #aaa 35%, transparent 45%) 0 0 / 2px 2px; }
      .side { display: flex; flex-direction: column; }
      .side ui-button:last-child { margin-top: 5px; }
      .mat { display: flex; margin-bottom: 8px; }
      ui-panel + ui-panel { margin-top: 2px; }
      .rows { display: flex; flex-direction: column; gap: 5px; padding: 6px 4px 20px 9px; }
    `;
  }

  markup() {
    const tabs = [["tools", "#ccc"], ["render", "#ccc", 1], ["printer", "#ccc"], ["image", "#bbb"], ["scene", "#bbb"], ["world", "#c9535b"], ["box", "#ccc", 1], ["orangebox", "#c07a3d", 1], ["fwrench", "#5b84cf"], ["particles", "#4a76b8"], ["physics", "#4d7ac4"], ["constraint", "#5580c8"], ["mesh", "#18a97a"], ["material", "#d9606c"], ["checker", "#b8545a", 1]];
    return `
      <header>
        <ui-button menu icon="toggles"></ui-button>
        <ui-field icon="search" placeholder="Search" style="flex:1;margin:0 48px 0 36px"></ui-field>
        <ui-button tone="dark" icon="down"></ui-button>
      </header>
      <div class="split">
        <div class="tabs">${tabs.map(([n, c, gap]) => `<button type="button" aria-label="${n}" class="${gap ? "gap" : ""} ${n === "material" ? "on" : ""}" style="color:${c}">${icon(n)}</button>`).join("")}</div>
        <div class="content">
          <div class="crumbs">${icon("object")}<span>cassete....</span><ui-icon class="sep" name="right"></ui-icon>${icon("material")}<span>Realistic Plastic...</span>${icon("pin", "margin-left:auto;color:#999")}</div>
          <div class="slots">
            <div class="list">
              <button class="item" type="button"><i class="ball"></i>Realistic Plastic Black</button>
              <div class="foot">${icon("play", "width:6px;height:6px")}<i class="dots"></i></div>
            </div>
            <div class="side"><ui-button tone="mid" icon="plus"></ui-button><ui-button tone="mid" icon="minus"></ui-button><ui-button tone="dark" icon="down"></ui-button></div>
          </div>
          <div class="mat">
            <ui-button menu icon="material"></ui-button>
            <ui-field label="Material" value="Realistic Plastic Bl..." style="flex:1;height:15px;padding-left:5px"></ui-field>
            <ui-button tone="mid" icon="shield" style="color:#999"></ui-button><ui-button tone="mid" icon="copy"></ui-button><ui-button tone="mid" icon="close" style="margin-right:9px"></ui-button>
            <ui-button menu icon="mesh"></ui-button>
          </div>
          <ui-panel heading="Preview"></ui-panel>
          <ui-panel heading="Surface" open>
            <div class="rows">
              <prop-row type="link" label="Surface" value="Principled BSDF" style="--socket:#63c763;margin-bottom:9px"></prop-row>
              <prop-row type="link" arrow="right" label="Base Color" value="Color Ramp" style="--socket:#c7c729"></prop-row>
              <prop-row type="number" label="Metallic" value="0.000"></prop-row>
              <prop-row type="link" arrow="right" label="Roughness" value="Color Ramp"></prop-row>
              <prop-row type="number" label="IOR" value="1.500"></prop-row>
              <prop-row type="number" label="Alpha" value="1.000" style="--fill:100%"></prop-row>
              <prop-row type="link" arrow="right" label="Normal" value="Bump" style="--socket:#6363c7"></prop-row>
              <prop-row type="group" arrow="right" label="Subsurface"></prop-row>
              <prop-row type="group" arrow="down" label="Specular"></prop-row>
              <prop-row type="select" value="Multiscatter GGX"></prop-row>
              <prop-row type="number" label="IOR Level" value="0.500" style="--fill:50%"></prop-row>
              <prop-row type="color" label="Tint" style="--socket:#c7c729"></prop-row>
              <prop-row type="number" label="Anisotropic" value="0.000"></prop-row>
              <prop-row type="number" label="Anisotropic R..." value="0.000"></prop-row>
              <prop-row type="link" label="Tangent" value="Default" style="--socket:#6363c7"></prop-row>
            </div>
          </ui-panel>
        </div>
      </div>
    `;
  }
}

class BlenderApp extends UiElement {
  styles() {
    return `
      :host {
        display: grid;
        grid-template: 16px minmax(0, 1fr) 118px / minmax(0, 503fr) minmax(0, 551fr) 219px;
        column-gap: 3px;
        height: 100vh;
        padding-left: 1px;
      }
      top-bar { grid-column: 1 / -1; margin-left: -1px; }
      time-line { grid-area: 3 / 1 / 4 / 3; margin-top: 3px; }
      .side { display: flex; flex-direction: column; gap: 2px; grid-area: 2 / 3 / 4 / 4; min-height: 0; }
      outliner-panel { flex: 226 1 0; }
      properties-panel { flex: 476 1 0; }
    `;
  }

  markup() {
    return `
      <top-bar></top-bar>
      <view-3d></view-3d>
      <node-editor></node-editor>
      <div class="side">
        <outliner-panel></outliner-panel>
        <properties-panel></properties-panel>
      </div>
      <time-line></time-line>
    `;
  }
}

customElements.define("ui-icon", UiIcon);
customElements.define("ui-button", UiButton);
customElements.define("ui-select", UiSelect);
customElements.define("ui-field", UiField);
customElements.define("ui-panel", UiPanel);
customElements.define("top-bar", TopBar);
customElements.define("scene-view", SceneView);
customElements.define("view-3d", View3d);
customElements.define("node-graph", NodeGraph);
customElements.define("node-editor", NodeEditor);
customElements.define("time-line", TimeLine);
customElements.define("tree-row", TreeRow);
customElements.define("outliner-panel", OutlinerPanel);
customElements.define("prop-row", PropRow);
customElements.define("properties-panel", PropertiesPanel);
customElements.define("blender-app", BlenderApp);
</script>
</body>
</html>
